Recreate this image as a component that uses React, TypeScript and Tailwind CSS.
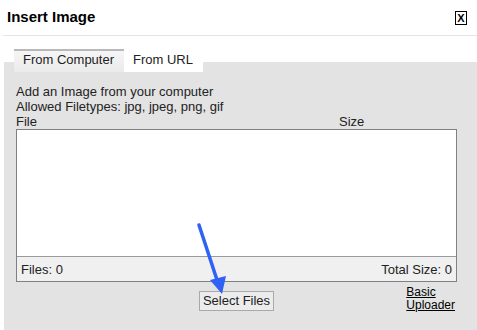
export default function App() {
  return (
    <div className="relative w-[477px] h-[330px] overflow-hidden bg-white font-['Liberation_Sans',Arial,sans-serif] text-[#222]">
      {/* header */}
      <div className="ml-[3px] h-[36px] flex justify-between items-start border-b border-[#e4e4e4] pl-[4px] pr-[10px] pt-[8px]">
        <h1 className="text-[15px] leading-[18px] font-bold text-black">Insert Image</h1>
        <button className="mt-[3px] w-[12px] h-[14px] border border-black flex items-center justify-center text-[11px] leading-none font-bold text-black">
          X
        </button>
      </div>

      {/* tabs */}
      <div className="relative z-10 mt-[13px] ml-[14px] flex items-end text-[13px] leading-[15px]">
        <div className="w-[110px] h-[23px] border-t-2 border-[#b8b8b8] bg-gradient-to-b from-[#f5f5f5] to-[#ebebeb] pt-[1px] pl-[9px]">
          From Computer
        </div>
        <div className="w-[79px] h-[22px] bg-white pt-[2px] pl-[9px]">From URL</div>
      </div>

      {/* panel */}
      <div className="-mt-[10px] ml-[4px] h-[280px] bg-[#e3e3e3] pt-[22px] pl-[12px] pr-[20px] text-[13px] leading-[15px]">
        <p>Add an Image from your computer</p>
        <p>Allowed Filetypes: jpg, jpeg, png, gif</p>
        <div className="flex">
          <span className="w-[323px]">File</span>
          <span>Size</span>
        </div>

        <div className="border border-[#808080] bg-white">
          <div className="h-[126px]" />
          <div className="h-[25px] border-t border-[#9a9a9a] bg-[#f0f0f0] flex items-center justify-between px-[4px]">
            <span>Files: 0</span>
            <span>Total Size: 0</span>
          </div>
        </div>

        <div className="grid grid-cols-[1fr_auto_1fr] items-start">
          <div />
          <button className="mt-[9px] h-[20px] border border-[#a9a9a9] bg-[#ececec] px-[3px] text-[13px] leading-[18px] text-[#222]">
            Select Files
          </button>
          <a href="#" className="justify-self-end mt-[4px] pr-[2px] text-[12px] leading-[13px] underline text-black">
            Basic
            <br />
            Uploader
          </a>
        </div>
      </div>

      {/* annotation arrow */}
      <svg className="absolute left-0 top-0 pointer-events-none" width="477" height="330" viewBox="0 0 477 330">
        <line x1="199" y1="225" x2="218" y2="283" stroke="#2f62f5" strokeWidth="3.5" strokeLinecap="round" />
        <polygon points="222,294 210,280 226,276" fill="#2f62f5" />
      </svg>
    </div>
  );
}
